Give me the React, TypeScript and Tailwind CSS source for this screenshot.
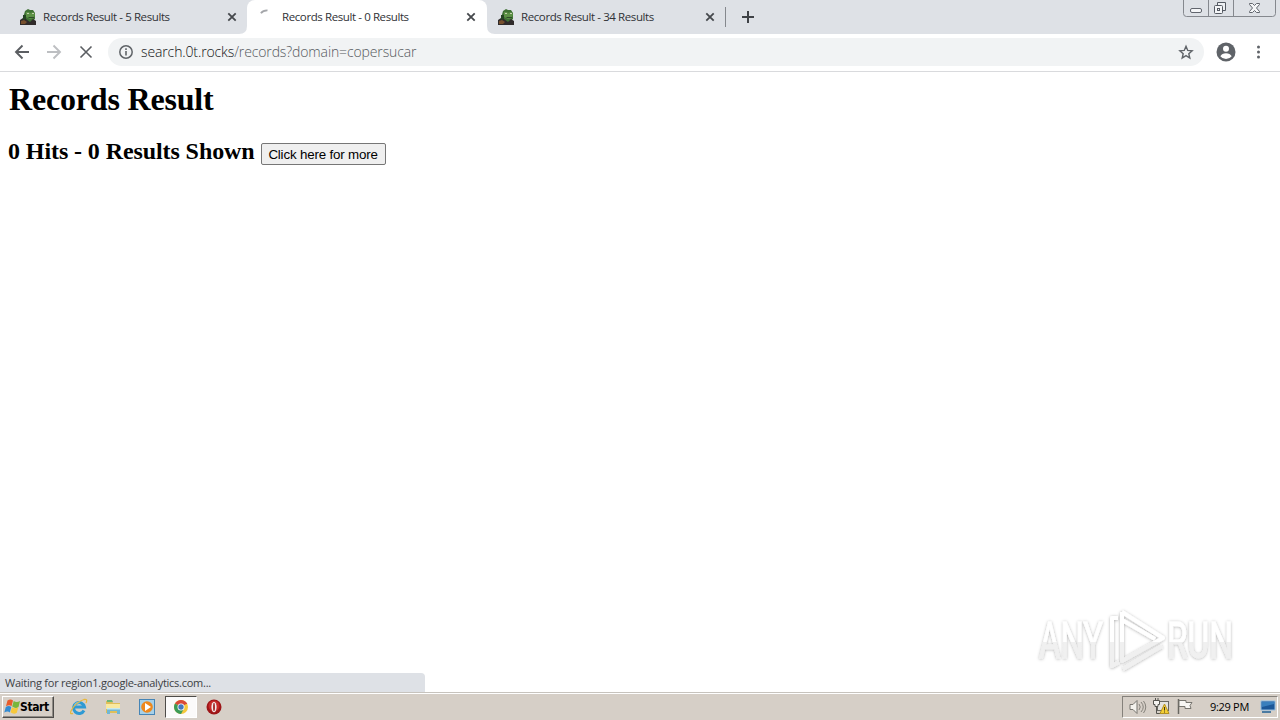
import React from 'react';

const tabs = [
    { title: 'Records Result - 5 Results', active: false },
    { title: 'Records Result - 0 Results', active: true },
    { title: 'Records Result - 34 Results', active: false },
];

function FrogIcon() {
    return (
        <svg width="16" height="16" viewBox="0 0 16 16">
            <path d="M5 2 8 0l2 1 3 0 2 3v6l-4 3H5L3 9z" fill="#3f7134" />
            <path d="M6 3h3l1 1 3-1 2 2-1 4-4 1-4-2z" fill="#5c9145" />
            <path d="M7 4h2v1H7zM12 4h2v1h-2z" fill="#c3cfae" />
            <path d="M8 8h6v1H9z" fill="#2f4c2b" />
            <path d="M0 16v-5l3-2 3 1 4 3 3-3 3 2v4z" fill="#302b2b" />
            <path d="m1 12 3-1 3 2-2 2H1z" fill="#77502e" />
            <path d="M3 6h3v4l-3 1z" fill="#264424" />
        </svg>
    );
}

function Spinner() {
    return (
        <svg width="16" height="16" viewBox="0 0 16 16" fill="none">
            <path d="M1.900 4.200Q4 1.200 8.500 1.300" stroke="#a4a6aa" strokeWidth="1.800" />
        </svg>
    );
}

function CloseIcon() {
    return (
        <svg width="10" height="10" viewBox="0 0 10 10" fill="none">
            <path d="m1.3 1.3 7.4 7.4m0-7.4L1.3 8.7" stroke="#45484c" strokeWidth="1.8" />
        </svg>
    );
}

function WindowButtons() {
    return (
        <svg className="ml-auto" width="97" height="18" viewBox="0 0 97 18" fill="none">
            <path d="M.5 0v13.500q0 3 3 3h86q3 0 3-3V0M25.500 0v16M50.500 0v16" stroke="#85888e" />
            <rect x="7.500" y="8.500" width="11" height="4" rx="1.500" fill="#f4f5f7" stroke="#61656d" />
            <path d="M34.500 5V2.500h8v8H40" fill="#eef0f3" stroke="#555a63" />
            <rect x="31.500" y="5.500" width="8" height="8" rx="1" fill="#f4f5f7" stroke="#555a63" />
            <rect x="34.500" y="8.500" width="2" height="2" stroke="#555a63" />
            <path d="M66.500 3.500h3l2 2 2-2h3v1l-3 3.500 3 3.500v1h-3l-2-2-2 2h-3v-1l3-3.500-3-3.500z" fill="#f4f5f7" stroke="#61656d" />
        </svg>
    );
}

function TabStrip() {
    return (
        <div className="flex h-[34px] shrink-0 bg-[#dee1e6] pl-[8px]">
            {tabs.map((tab) => (
                <div
                    key={tab.title}
                    className={
                        tab.active
                            ? '-mr-px relative flex h-[34px] w-[240px] items-center rounded-t-lg bg-white pl-[12px]'
                            : 'flex h-[34px] w-[239px] items-center pl-[12px]'
                    }
                >
                    {tab.active && (
                        <svg className="absolute -left-2 bottom-0" width="256" height="8" viewBox="0 0 256 8">
                            <path d="M8 0v8H0q8 0 8-8zM248 0v8h8q-8 0-8-8z" fill="white" />
                        </svg>
                    )}
                    <div className="w-[23px]">{tab.active ? <Spinner /> : <FrogIcon />}</div>
                    <span className="w-[184px] whitespace-nowrap text-[11.5px] tracking-[-0.4px] text-[#303236]">{tab.title}</span>
                    <CloseIcon />
                </div>
            ))}
            <div className="mt-[7px] h-5 w-px bg-[#85888d]" />
            <svg className="mt-[11px] ml-[16px]" width="12" height="12" viewBox="0 0 12 12">
                <path d="M5 0h2v5h5v2H7v5H5V7H0V5h5z" fill="#3f4246" />
            </svg>
            <WindowButtons />
        </div>
    );
}

function Toolbar() {
    return (
        <div className="flex h-[38px] shrink-0 items-center border-b border-[#d9dadd] bg-white pb-px pl-[14px]">
            <svg width="80" height="16" viewBox="0 0 80 16" fill="none" strokeWidth="1.9">
                <path d="M15 8H2m6.500-6.500L2 8l6.500 6.500" stroke="#5b5e62" />
                <path d="M33 8h13m-6.500-6.500L46 8l-6.500 6.500" stroke="#bdbfc2" />
                <path d="m66.500 2.500 11 11m0-11-11 11" stroke="#5b5e62" strokeWidth="1.600" />
            </svg>
            <div className="ml-[14px] flex h-7 w-[1096px] items-center rounded-full bg-[#f1f3f4] pl-[10px]">
                <svg width="16" height="16" viewBox="0 0 16 16" fill="none">
                    <circle cx="8" cy="8" r="6.200" stroke="#606468" strokeWidth="1.500" />
                    <path d="M8 7v4.500M8 4.300v1.600" stroke="#606468" strokeWidth="1.600" />
                </svg>
                <span className="-mt-px ml-[7px] font-['Open_Sans',sans-serif] text-[14px] font-light tracking-[-0.12px] text-[#55595d]">
                    <span className="text-[#101113]">search.0t.rocks</span>/records?domain=copersucar
                </span>
                <svg className="mr-[10px] ml-auto" width="16" height="16" viewBox="0 0 24 24" fill="none">
                    <path d="m12 3.500 2.600 6.100 6.600.6-5 4.300 1.500 6.500-5.700-3.500L6.300 21l1.500-6.500-5-4.300 6.600-.6z" stroke="#5f6368" strokeWidth="2.100" />
                </svg>
            </div>
            <svg className="ml-[12px]" width="20" height="20" viewBox="0 0 20 20">
                <circle cx="10" cy="10" r="9.500" fill="#5f6368" />
                <circle cx="10" cy="6.700" r="3" fill="white" />
                <path d="M4.300 14.200q1.700-2.900 5.700-2.900t5.700 2.900Q13.500 17 10 17t-5.700-2.800z" fill="white" />
            </svg>
            <svg className="ml-[20px]" width="4" height="16" viewBox="0 0 4 16" fill="#5f6368">
                <circle cx="2.500" cy="3" r="1.500" />
                <circle cx="2.500" cy="8" r="1.500" />
                <circle cx="2.500" cy="13" r="1.500" />
            </svg>
        </div>
    );
}

function Watermark() {
    return (
        <svg className="absolute right-[34px] bottom-[12px] overflow-visible" width="216" height="72" viewBox="0 0 216 72">
            <defs>
                <linearGradient id="fade" x1="0" x2="0" y1="13" y2="56" gradientUnits="userSpaceOnUse">
                    <stop offset="0" stopColor="#ffffff" />
                    <stop offset=".48" stopColor="#ffffff" />
                    <stop offset=".5" stopColor="#f0f0f0" />
                    <stop offset="1" stopColor="#f0f0f0" />
                </linearGradient>
                <filter id="shadow" x="-10%" y="-10%" width="120%" height="125%">
                    <feDropShadow dx="0" dy="0.500" stdDeviation="1.600" floodColor="#000000" floodOpacity=".32" />
                </filter>
            </defs>
            <g filter="url(#shadow)" fill="url(#fade)">
                <text x="9" y="50" textLength="64" lengthAdjust="spacingAndGlyphs" fontFamily="Roboto, sans-serif" fontSize="50" stroke="url(#fade)" strokeWidth=".8">ANY</text>
                <text x="137" y="50" textLength="66" lengthAdjust="spacingAndGlyphs" fontFamily="Roboto, sans-serif" fontSize="50" stroke="url(#fade)" strokeWidth=".8">RUN</text>
                <g fill="none" stroke="url(#fade)" strokeWidth="4" strokeLinejoin="round">
                    <path d="M92 4v49l41-23L92 4M92 12l33 19" />
                    <path d="M88 10h-6v48l7-4M93 61l39-23" />
                </g>
            </g>
        </svg>
    );
}

function Page() {
    return (
        <div className="relative grow bg-white px-2 pt-[8px] font-['Liberation_Serif',serif] text-black">
            <h1 className="pl-px text-[32px] leading-[38px] font-bold tracking-[-0.18px]">Records Result</h1>
            <div className="mt-[19px] flex items-start">
                <h2 className="text-[24px] leading-[28px] font-bold tracking-[-0.09px]">0 Hits - 0 Results Shown</h2>
                <button className="mt-[6px] ml-[6px] h-[22px] w-[125px] rounded-[2px] border border-[#767676] bg-[#efefef] pt-px font-['Liberation_Sans',sans-serif] text-[13.333px] leading-none tracking-[-0.17px] whitespace-nowrap">
                    Click here for more
                </button>
            </div>
            <Watermark />
            <div className="absolute bottom-0 left-0 flex h-[19px] w-[425px] items-center rounded-tr bg-[#dee1e6] pt-[2px] pl-[5px] font-['Open_Sans',sans-serif] text-[11px] tracking-[-0.25px] text-[#3c4043]">
                Waiting for region1.google-analytics.com...
            </div>
        </div>
    );
}

function StartFlag() {
    return (
        <svg width="17" height="16" viewBox="0 0 17 16">
            <path d="M3.500 1.500q3-2 5.500 0L7.500 7.300q-2-2-5.500 0z" fill="#e85c2b" />
            <path d="M9.700 2q3 2 6.300 0l-1.500 6q-3 2-6.300-.5z" fill="#78b63c" />
            <path d="M1.800 8q3-2 5.500 0l-1.500 5.500q-2-2-5.500 0z" fill="#338bd2" />
            <path d="M8 8.300q3 2 6.300 0l-1.500 5.500q-3 2-6.300-.5z" fill="#f7c83b" />
        </svg>
    );
}

function IeIcon() {
    return (
        <svg width="18" height="18" viewBox="0 0 18 18" fill="none">
            <path d="M14 12.500A5.500 5.500 0 1 1 14.500 9H5" stroke="#2e9ad4" strokeWidth="3" />
            <path d="M4.500 8q1-3.500 5-3.500" stroke="#79cdf1" strokeWidth="1.500" />
            <path d="M3 15.500q-4 1-1.500-3.500Q6 4 14 1.500q4-1 2 3.500" stroke="#e8b83d" strokeWidth="1.300" />
        </svg>
    );
}

function FolderIcon() {
    return (
        <svg width="18" height="18" viewBox="0 0 18 18">
            <path d="M2 3h6l1 2h7v10H2z" fill="#dfbf59" />
            <path d="M3 2h5l1 2H3z" fill="#6eb676" />
            <path d="M2 6h14v5H2z" fill="#f8e9a0" />
            <path d="M3 10h13v6h-3v-3H6v3H3z" fill="#70b7d5" />
            <path d="M3 10h13v1.500H3z" fill="#c8e9ee" />
        </svg>
    );
}

function MediaIcon() {
    return (
        <svg width="18" height="18" viewBox="0 0 18 18">
            <rect x="1" y="1" width="16" height="16" fill="#4685b6" />
            <rect x="2" y="2" width="14" height="14" fill="#a6d0e8" />
            <circle cx="9" cy="9" r="5.800" fill="#ee881c" />
            <path d="m7 5 6 4-6 4z" fill="white" />
        </svg>
    );
}

function ChromeIcon() {
    return (
        <svg width="16" height="16" viewBox="0 0 16 16">
            <circle cx="8" cy="8" r="7" fill="#f5c83d" />
            <path d="M8 8 1.940 4.500A7 7 0 0 1 14.060 4.500z" fill="#d94a38" />
            <path d="M8 8 1.940 4.500A7 7 0 0 0 8 15l3-5.500z" fill="#3c9b57" />
            <path d="M8 4.500h6.060" stroke="#d94a38" />
            <circle cx="8" cy="8" r="3.500" fill="white" />
            <circle cx="8" cy="8" r="2.700" fill="#4478be" />
        </svg>
    );
}

function OperaIcon() {
    return (
        <svg width="16" height="16" viewBox="0 0 16 16">
            <circle cx="8" cy="8" r="7.500" fill="#9d1517" />
            <ellipse cx="8" cy="7" rx="5.500" ry="5.500" fill="#c72a2a" />
            <ellipse cx="8" cy="8" rx="2.600" ry="5.300" fill="#f2eded" />
            <ellipse cx="8" cy="8" rx="1" ry="4.300" fill="#a83030" />
        </svg>
    );
}

function TrayIcons() {
    return (
        <svg width="68" height="18" viewBox="0 0 68 18" fill="none">
            <path d="M1 6.500h3l4-4v13l-4-4H1z" fill="#f4f2ed" stroke="#77756f" />
            <path d="M10 6q2.500 3 0 6M12 4q4.500 5 0 10M14.500 3q4.500 6 0 12" stroke="#85827b" />
            <rect x="28.500" y="3.500" width="11" height="9" fill="#e5e4df" stroke="#686862" />
            <path d="M27.500 6.500v9h4" stroke="#55544f" />
            <path d="M24.500 2.500h6v4h-1.500v2h-3v-2h-1.500z" fill="#f5f4f0" stroke="#55544f" />
            <path d="M26.500 0v2.500m2.500-2.500v2.500" stroke="#55544f" />
            <path d="m35.500 6 4.500 9.500H31z" fill="#f5cf34" stroke="#b39121" />
            <path d="M35.500 9v3.500m0 1v1" stroke="#3d3520" />
            <path d="M49.500 1v15" stroke="#686761" strokeWidth="1.500" />
            <path d="M50 2.500h7v2h6l-2 3 1 3h-6v-2h-6z" fill="#f7f6f3" stroke="#77756f" />
        </svg>
    );
}

function Taskbar() {
    return (
        <div className="flex h-[28px] shrink-0 items-center border-t border-[#c7c3bd] bg-[#d6cfc7] font-['Open_Sans',sans-serif] text-[11px] shadow-[inset_0_1px_0_#ffffff]">
            <div className="mt-px ml-[2px] flex h-[22px] w-[52px] items-center border border-t-white border-r-[#4e4c49] border-b-[#4e4c49] border-l-white pl-px shadow-[inset_-1px_-1px_0_#908c86]">
                <StartFlag />
                <span className="-ml-px font-['DejaVu_Sans_Condensed','DejaVu_Sans',sans-serif] text-[12px] font-bold tracking-[-0.4px] text-black">Start</span>
            </div>
            <div className="mt-px ml-[16px] flex items-center">
                <IeIcon />
                <div className="ml-[16px]"><FolderIcon /></div>
                <div className="ml-[16px]"><MediaIcon /></div>
                <div className="ml-[9px] flex h-[22px] w-[32px] items-center justify-center border border-t-[#4e4c49] border-r-white border-b-white border-l-[#4e4c49] bg-[#fbfafa]">
                    <ChromeIcon />
                </div>
                <div className="ml-[9px]"><OperaIcon /></div>
            </div>
            <div className="mt-px mr-[2px] ml-auto flex h-[22px] w-[156px] items-center border border-t-[#85817b] border-r-white border-b-white border-l-[#85817b] pl-[6px] text-black">
                <TrayIcons />
                <span className="ml-[13px] w-[49px] whitespace-nowrap tracking-[-0.3px]">9:29 PM</span>
                <svg width="18" height="16" viewBox="0 0 18 16">
                    <path d="M2 2h14v9H2z" fill="#1c5798" stroke="#93bee2" />
                    <path d="m3 3 12 0v2L3 8z" fill="#397fbd" />
                    <path d="M3 13h9" stroke="#4b7aa1" strokeWidth="2" />
                </svg>
            </div>
        </div>
    );
}

export default function App() {
    return (
        <div className="flex h-[720px] w-[1280px] flex-col overflow-hidden bg-white font-['Open_Sans',sans-serif]">
            <TabStrip />
            <Toolbar />
            <Page />
            <Taskbar />
        </div>
    );
}
